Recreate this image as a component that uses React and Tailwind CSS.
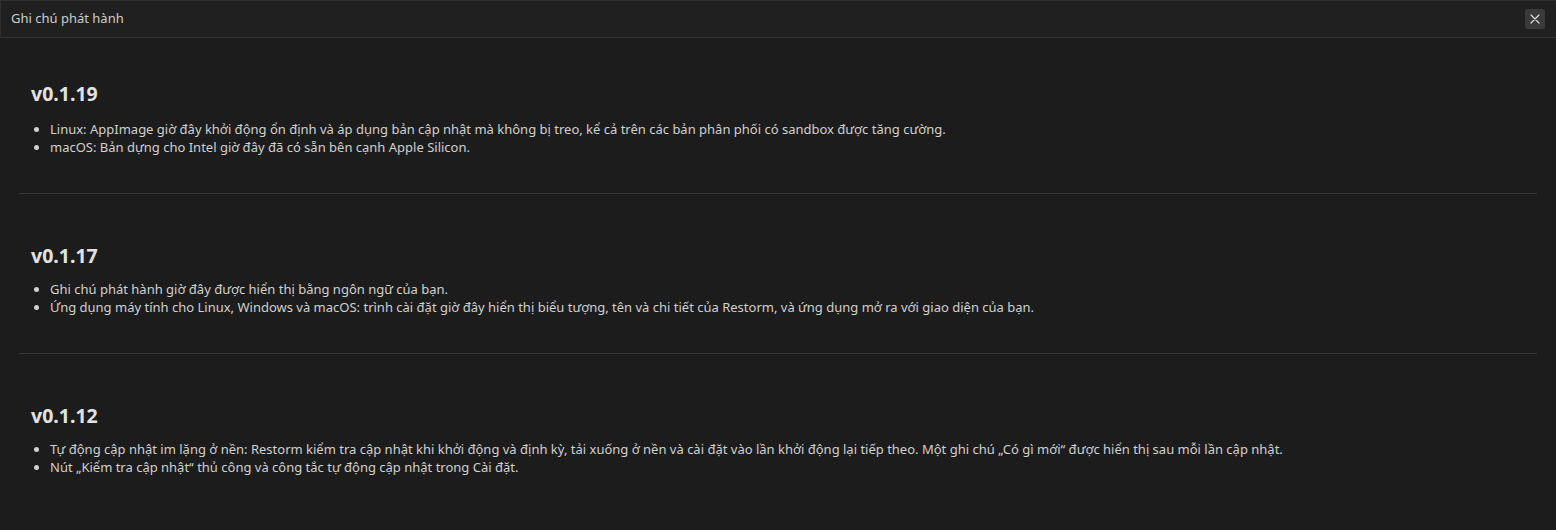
import React from "react";

const releases = [
  {
    v: "v0.1.19",
    items: [
      "Linux: AppImage giờ đây khởi động ổn định và áp dụng bản cập nhật mà không bị treo, kể cả trên các bản phân phối có sandbox được tăng cường.",
      "macOS: Bản dựng cho Intel giờ đây đã có sẵn bên cạnh Apple Silicon.",
    ],
  },
  {
    v: "v0.1.17",
    items: [
      "Ghi chú phát hành giờ đây được hiển thị bằng ngôn ngữ của bạn.",
      "Ứng dụng máy tính cho Linux, Windows và macOS: trình cài đặt giờ đây hiển thị biểu tượng, tên và chi tiết của Restorm, và ứng dụng mở ra với giao diện của bạn.",
    ],
  },
  {
    v: "v0.1.12",
    items: [
      "Tự động cập nhật im lặng ở nền: Restorm kiểm tra cập nhật khi khởi động và định kỳ, tải xuống ở nền và cài đặt vào lần khởi động lại tiếp theo. Một ghi chú „Có gì mới“ được hiển thị sau mỗi lần cập nhật.",
      "Nút „Kiểm tra cập nhật“ thủ công và công tắc tự động cập nhật trong Cài đặt.",
    ],
  },
];

export default function App() {
  return (
    <div
      className="w-[1556px] h-[530px] bg-[#1c1c1c] text-[#d4d4d4] flex flex-col overflow-hidden"
      style={{ fontFamily: '"Noto Sans", "Open Sans", sans-serif' }}
    >
      <div className="h-[38px] shrink-0 flex items-center justify-between pl-[10px] pr-[11px] bg-[#202020] border-t border-l border-[#2e2e2e] border-b border-b-[#333333]">
        <span className="text-[13px] text-[#cccccc]">Ghi chú phát hành</span>
        <button className="w-[20px] h-[20px] rounded-[3px] bg-[#3a3a3a] flex items-center justify-center">
          <svg width="12" height="12" viewBox="0 0 12 12" fill="none" stroke="#d8d8d8" strokeWidth="1.2" strokeLinecap="round">
            <path d="M2 2 L10 10 M10 2 L2 10" />
          </svg>
        </button>
      </div>
      <div className="flex-1 px-[19px]">
        {releases.map((r, i) => (
          <div
            key={r.v}
            className={
              (i === 0 ? "pt-[42px] " : "pt-[48px] ") +
              (i < releases.length - 1 ? "border-b border-[#363636] pb-[37px]" : "pb-[37px]")
            }
          >
            <div className="px-[12px]">
              <h2 className="text-[19.5px] leading-[28px] font-bold text-[#e2e2e2]">{r.v}</h2>
              <ul
                className={
                  (i === 0 ? "mt-[12px] " : "mt-[10px] ") +
                  "list-disc pl-[19px] text-[13px] leading-[18px] text-[#d0d0d0]"
                }
              >
                {r.items.map((t) => (
                  <li key={t}>{t}</li>
                ))}
              </ul>
            </div>
          </div>
        ))}
      </div>
    </div>
  );
}
